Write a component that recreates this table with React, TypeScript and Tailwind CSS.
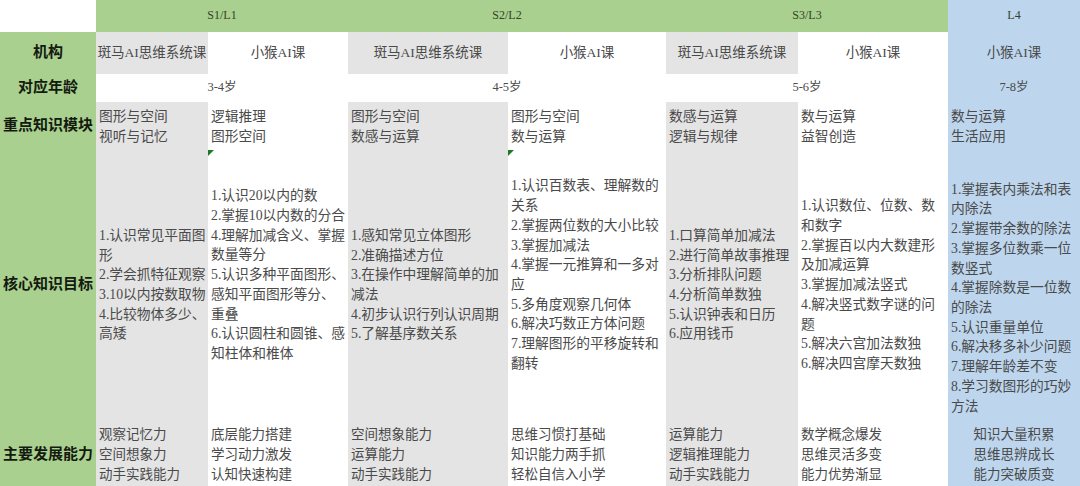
const GRAY = 'bg-[#e4e4e4]';
const WHITE = 'bg-white';
const BLUE = 'bg-[#bdd6ee]';
const GREEN = 'bg-[#a9d08e]';

const colBg = [GRAY, WHITE, GRAY, WHITE, GRAY, WHITE, BLUE];

const orgs = ['斑马AI思维系统课', '小猴AI课', '斑马AI思维系统课', '小猴AI课', '斑马AI思维系统课', '小猴AI课', '小猴AI课'];

const modules = [
  ['图形与空间', '视听与记忆'],
  ['逻辑推理', '图形空间'],
  ['图形与空间', '数感与运算'],
  ['图形与空间', '数与运算'],
  ['数感与运算', '逻辑与规律'],
  ['数与运算', '益智创造'],
  ['数与运算', '生活应用'],
];

const goals = [
  ['1.认识常见平面图', '形', '2.学会抓特征观察', '3.10以内按数取物', '4.比较物体多少、', '高矮'],
  ['1.认识20以内的数', '2.掌握10以内数的分合', '4.理解加减含义、掌握', '数量等分', '5.认识多种平面图形、', '感知平面图形等分、', '重叠', '6.认识圆柱和圆锥、感', '知柱体和椎体'],
  ['1.感知常见立体图形', '2.准确描述方位', '3.在操作中理解简单的加', '减法', '4.初步认识行列认识周期', '5.了解基序数关系'],
  ['1.认识百数表、理解数的', '关系', '2.掌握两位数的大小比较', '3.掌握加减法', '4.掌握一元推算和一多对', '应', '5.多角度观察几何体', '6.解决巧数正方体问题', '7.理解图形的平移旋转和', '翻转'],
  ['1.口算简单加减法', '2.进行简单故事推理', '3.分析排队问题', '4.分析简单数独', '5.认识钟表和日历', '6.应用钱币'],
  ['1.认识数位、位数、数', '和数字', '2.掌握百以内大数建形', '及加减运算', '3.掌握加减法竖式', '4.解决竖式数字谜的问', '题', '5.解决六宫加法数独', '6.解决四宫摩天数独'],
  ['1.掌握表内乘法和表', '内除法', '2.掌握带余数的除法', '3.掌握多位数乘一位', '数竖式', '4.掌握除数是一位数', '的除法', '5.认识重量单位', '6.解决移多补少问题', '7.理解年龄差不变', '8.学习数图形的巧妙', '方法'],
];

// small per-cell nudges so the text blocks sit where they do in the sheet
const goalPad = ['', 'pb-[20px]', '', 'pb-[20px]', '', '', 'pt-[26px]'];

const abilities = [
  ['观察记忆力', '空间想象力', '动手实践能力'],
  ['底层能力搭建', '学习动力激发', '认知快速构建'],
  ['空间想象能力', '运算能力', '动手实践能力'],
  ['思维习惯打基础', '知识能力两手抓', '轻松自信入小学'],
  ['运算能力', '逻辑推理能力', '动手实践能力'],
  ['数学概念爆发', '思维灵活多变', '能力优势渐显'],
  ['知识大量积累', '思维思辨成长', '能力突破质变'],
];

function Label({ children }: { children: React.ReactNode }) {
  return (
    <div className={`${GREEN} flex items-center justify-center text-[15px] font-bold text-[#141a10] whitespace-nowrap`}>
      {children}
    </div>
  );
}

function Lines({ lines }: { lines: string[] }) {
  return (
    <div>
      {lines.map((l, i) => (
        <div key={i} className="whitespace-nowrap">
          {l}
        </div>
      ))}
    </div>
  );
}

function Marker() {
  return (
    <span className="absolute left-0 top-0 h-0 w-0 border-t-[6px] border-r-[6px] border-t-[#1d7a24] border-r-transparent" />
  );
}

export default function App() {
  return (
    <div className="h-[486px] w-[1080px] overflow-hidden bg-white font-['Liberation_Serif','Noto_Sans_CJK_SC',serif] text-[13.75px] leading-[19.7px] text-[#4a4a4a]">
      <div className="grid grid-cols-[96px_112px_140px_160px_158px_132px_150px_132px] grid-rows-[32px_42px_28px_48px_270px_70px]">
        {/* header */}
        <div className="bg-white" />
        <div className={`${GREEN} col-span-2 flex items-center justify-center text-[12px] text-[#34422a]`}>S1/L1</div>
        <div className={`${GREEN} col-span-2 flex items-center justify-center text-[12px] text-[#34422a]`}>S2/L2</div>
        <div className={`${GREEN} col-span-2 flex items-center justify-center text-[12px] text-[#34422a]`}>S3/L3</div>
        <div className={`${BLUE} flex items-center justify-center text-[12px] text-[#34422a]`}>L4</div>

        {/* 机构 */}
        <Label>机构</Label>
        {orgs.map((o, i) => (
          <div key={i} className={`${colBg[i]} flex items-center justify-center whitespace-nowrap text-[13.5px]`}>
            {o}
          </div>
        ))}

        {/* 对应年龄 */}
        <Label>对应年龄</Label>
        <div className="col-span-2 flex items-center justify-center bg-white text-[12.5px]">3-4岁</div>
        <div className="col-span-2 flex items-center justify-center bg-white text-[12.5px]">4-5岁</div>
        <div className="col-span-2 flex items-center justify-center bg-white text-[12.5px]">5-6岁</div>
        <div className={`${BLUE} flex items-center justify-center text-[12.5px]`}>7-8岁</div>

        {/* 重点知识模块 */}
        <Label>重点知识模块</Label>
        {modules.map((m, i) => (
          <div key={i} className={`${colBg[i]} pl-[3px] pt-[5px]`}>
            <Lines lines={m} />
          </div>
        ))}

        {/* 核心知识目标 */}
        <Label>核心知识目标</Label>
        {goals.map((g, i) => (
          <div key={i} className={`${colBg[i]} relative flex items-center pl-[3px] ${goalPad[i]}`}>
            {(i === 1 || i === 3) && <Marker />}
            <Lines lines={g} />
          </div>
        ))}

        {/* 主要发展能力 */}
        <Label>主要发展能力</Label>
        {abilities.map((a, i) => (
          <div
            key={i}
            className={`${colBg[i]} flex items-center text-[13.5px] ${i === 6 ? 'justify-center text-center' : 'pl-[3px]'}`}
          >
            <Lines lines={a} />
          </div>
        ))}
      </div>
    </div>
  );
}
